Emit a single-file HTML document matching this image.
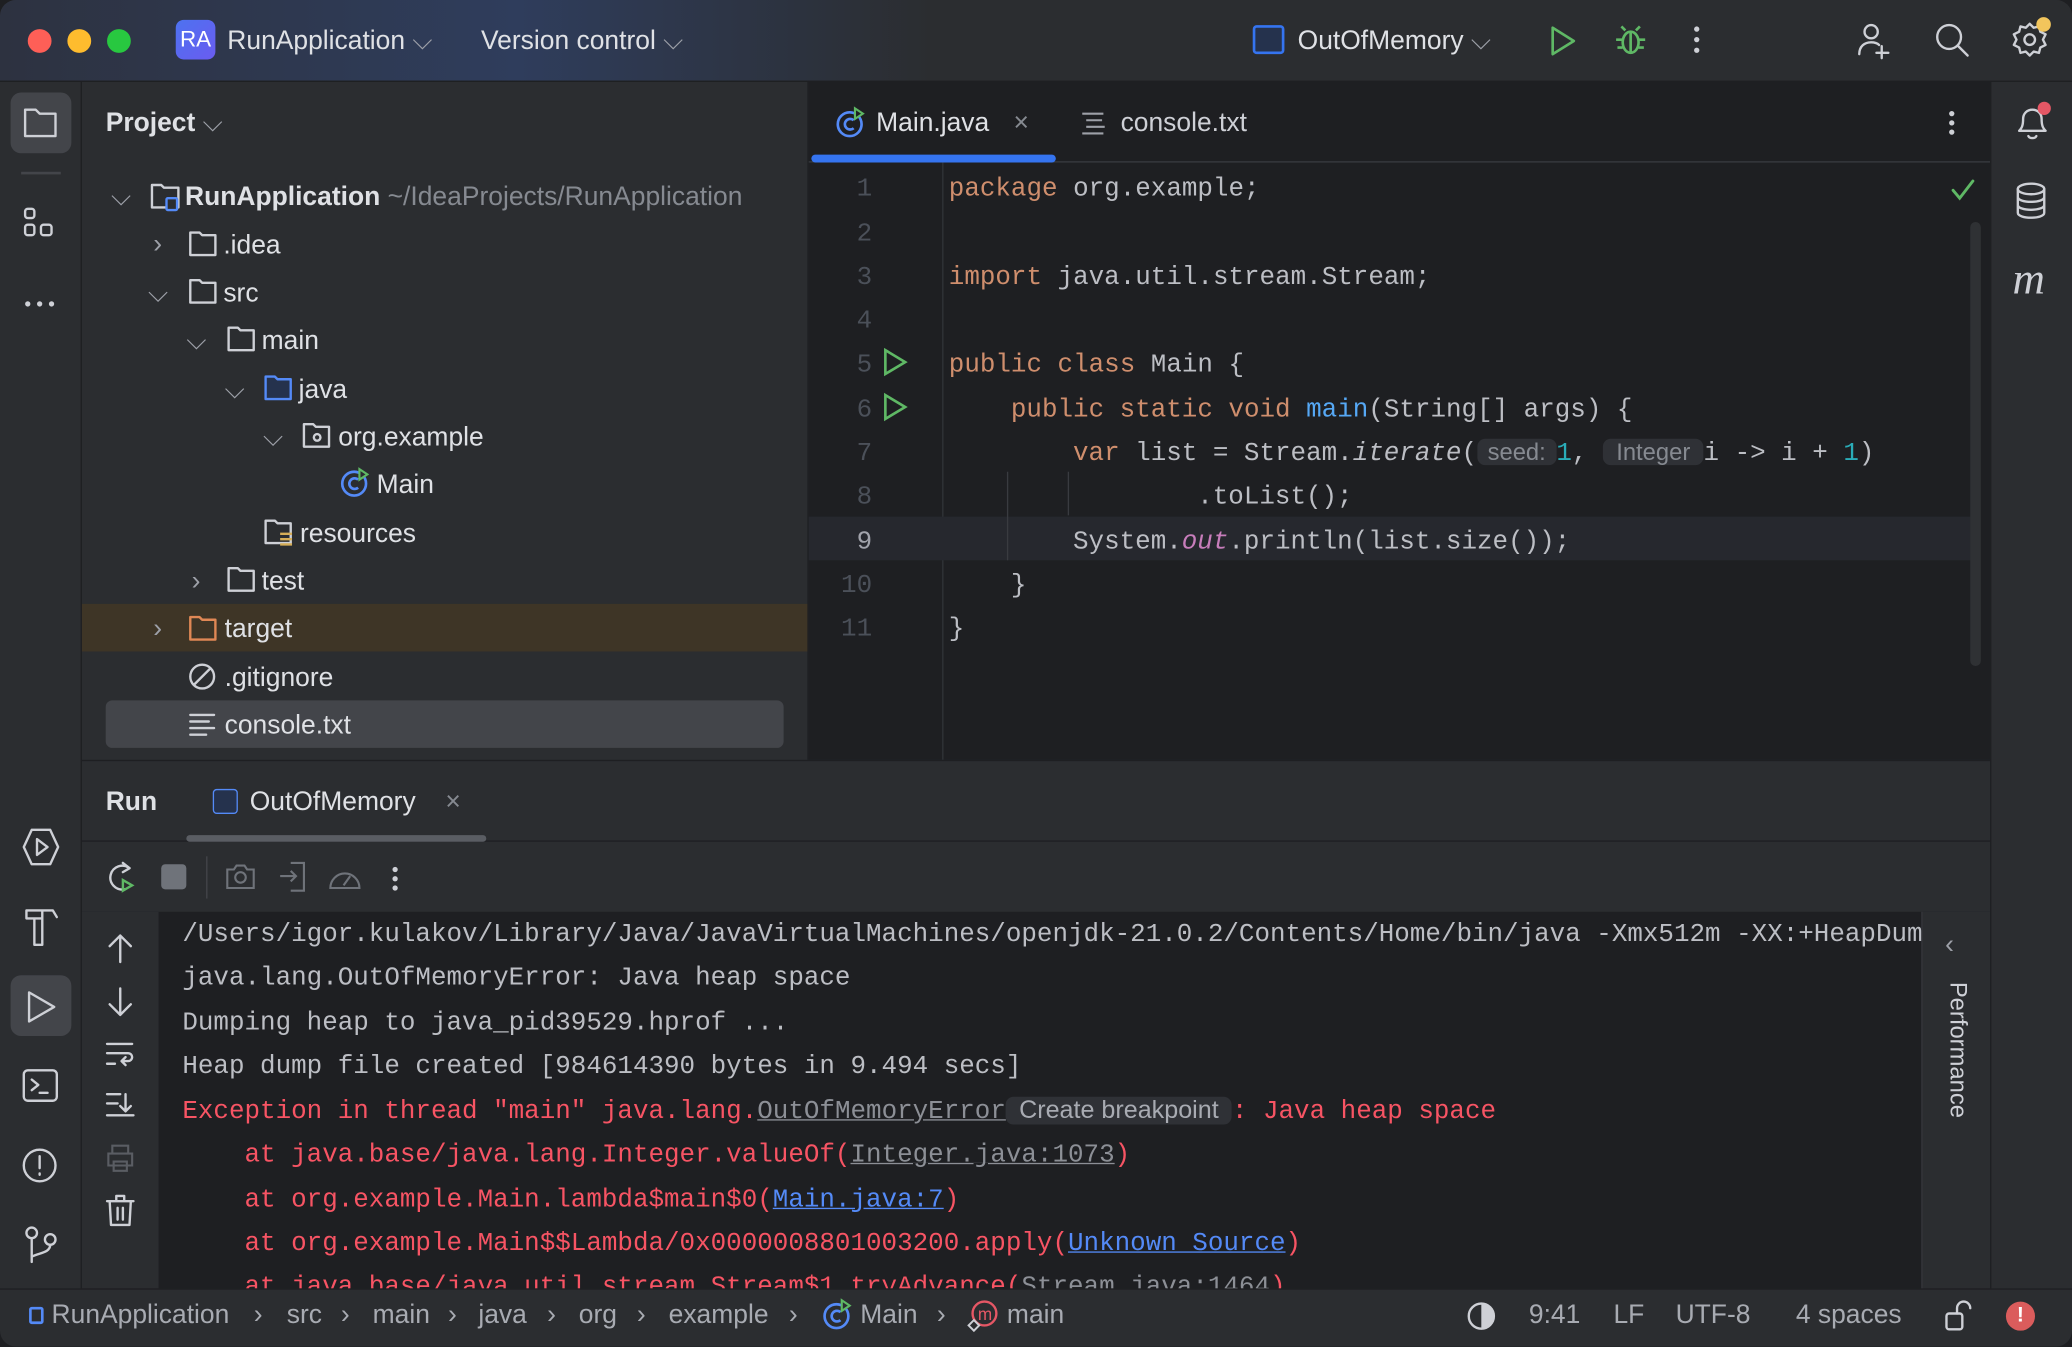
<!DOCTYPE html>
<html><head><meta charset="utf-8"><style>
html,body{margin:0;padding:0;background:#1e1f22;overflow:hidden;width:2072px;height:1346px}
#w{position:absolute;left:0;top:0;width:1568px;height:1019px;transform:scale(1.32143);transform-origin:0 0;background:#2b2d30;font-family:"Liberation Sans",sans-serif;color:#dfe1e5;border-radius:12px;overflow:hidden}
.a{position:absolute;white-space:nowrap}
.ui{font-size:20px;margin-top:2px}
.mono{font-family:"Liberation Mono",monospace;font-size:19.6px}
.kw{color:#cf8e6d}.fn{color:#56a8f5}.num{color:#2aacb8}.st{color:#c77dbb;font-style:italic}
.hint{background:#2f3136;color:#868a91;border-radius:6px;padding:0 8px;font-family:"Liberation Sans",sans-serif;font-size:18px}
.red{color:#f75464}
.ln{color:#4b5059;width:40px;text-align:right}
svg{position:absolute;overflow:visible}
.ic{fill:none;stroke:#ced0d6;stroke-width:1.8;stroke-linecap:round;stroke-linejoin:round}
.sb{color:#a8abb2}
</style></head><body><div id="w">
<!-- title bar -->
<div class="a" style="left:0;top:0;width:1568px;height:61px;background:linear-gradient(90deg,#2d3240 0%,#2f3d5c 25%,#2b2d30 45%,#2b2d30 100%);border-bottom:1px solid #1e1f22"></div>
<div class="a" style="left:21px;top:22px;width:18px;height:18px;border-radius:50%;background:#fe5f57"></div>
<div class="a" style="left:51px;top:22px;width:18px;height:18px;border-radius:50%;background:#febc2e"></div>
<div class="a" style="left:81px;top:22px;width:18px;height:18px;border-radius:50%;background:#28c840"></div>
<div class="a" style="left:133px;top:15px;width:30px;height:30px;border-radius:6px;background:linear-gradient(135deg,#4d72f0,#6a5cf0);font-size:17px;line-height:30px;text-align:center;color:#fff">RA</div>
<div class="a ui" style="left:172px;top:18px">RunApplication <span style="color:#9da0a8">⌵</span></div>
<div class="a ui" style="left:364px;top:18px">Version control <span style="color:#9da0a8">⌵</span></div>
<div class="a" style="left:948px;top:19px;width:24px;height:22px;border:2px solid #3574f0;border-radius:3px;box-sizing:border-box;background:#25324d"></div>
<div class="a ui" style="left:982px;top:18px">OutOfMemory <span style="color:#9da0a8">⌵</span></div>
<svg style="left:1172px;top:19px" width="22" height="24"><path d="M3 2 L19 12 L3 22 Z" fill="none" stroke="#5fb865" stroke-width="2" stroke-linejoin="round"/></svg>
<svg style="left:1222px;top:17px" width="24" height="26"><ellipse cx="12" cy="15" rx="6" ry="8" fill="none" stroke="#5fb865" stroke-width="2"/><path d="M6 13H1M23 13h-5M6 19H2M22 19h-4M8 6 5 3M16 6l3-3M12 8v14" stroke="#5fb865" stroke-width="2" fill="none"/></svg>
<div class="a" style="left:1282px;top:20px;width:4px;height:4px;border-radius:2px;background:#ced0d6;box-shadow:0 8px #ced0d6,0 16px #ced0d6"></div>
<svg style="left:1404px;top:16px" width="30" height="30"><circle cx="12" cy="8" r="5" class="ic"/><path d="M3 25c0-6 4-9 9-9 3 0 5 1 6 2M20 19v9M16 24h9" class="ic"/></svg>
<svg style="left:1464px;top:17px" width="28" height="28"><circle cx="11" cy="11" r="9" class="ic"/><path d="M18 18l7 7" class="ic"/></svg>
<svg style="left:1522px;top:15px" width="30" height="30"><circle cx="14" cy="15" r="4" class="ic"/><path d="M14 3l3 3 4-1 1 4 4 2-2 4 2 4-4 2-1 4-4-1-3 3-3-3-4 1-1-4-4-2 2-4-2-4 4-2 1-4 4 1z" class="ic"/></svg>
<div class="a" style="left:1541px;top:13px;width:11px;height:11px;border-radius:50%;background:#f2c55c"></div>

<!-- left strip -->
<div class="a" style="left:61px;top:62px;width:1px;height:913px;background:#1e1f22"></div>
<div class="a" style="left:8px;top:70px;width:46px;height:46px;border-radius:8px;background:#43454a"></div>
<svg style="left:17px;top:80px" width="28" height="26"><path d="M2 3h8l3 3h12v17H2z" class="ic"/></svg>
<div class="a" style="left:16px;top:130px;width:30px;height:2px;background:#43454a"></div>
<svg style="left:18px;top:157px" width="26" height="28"><rect x="1" y="1" width="7" height="7" rx="2" class="ic"/><rect x="1" y="13" width="7" height="8" rx="2" class="ic"/><rect x="13" y="13" width="8" height="8" rx="2" class="ic"/></svg>
<div class="a" style="left:19px;top:228px;width:4px;height:4px;border-radius:2px;background:#ced0d6;box-shadow:9px 0 #ced0d6,18px 0 #ced0d6"></div>
<svg style="left:16px;top:626px" width="30" height="30"><path d="M8 2h14l6 13-6 13H8L2 15z" class="ic"/><path d="M12 9l8 6-8 6z" class="ic"/></svg>
<svg style="left:18px;top:686px" width="28" height="32"><path d="M2 3h20l3 5M2 3v6h6M8 9h6v20h-6zM14 3v6" class="ic"/></svg>
<div class="a" style="left:8px;top:738px;width:46px;height:46px;border-radius:8px;background:#43454a"></div>
<svg style="left:19px;top:748px" width="26" height="28"><path d="M3 3l19 11L3 25z" class="ic"/></svg>
<svg style="left:17px;top:808px" width="28" height="28"><rect x="1" y="2" width="25" height="23" rx="3" class="ic"/><path d="M7 9l5 4-5 4M13 19h6" class="ic"/></svg>
<svg style="left:16px;top:868px" width="30" height="30"><circle cx="14" cy="14" r="12" class="ic"/><path d="M14 7v9M14 20v1" class="ic"/></svg>
<svg style="left:18px;top:928px" width="28" height="30"><circle cx="6" cy="5" r="4" class="ic"/><circle cx="20" cy="10" r="4" class="ic"/><path d="M6 9v18M20 14c0 6-8 6-14 9" class="ic"/></svg>

<!-- project panel -->
<div class="a ui" style="left:80px;top:80px;font-weight:bold">Project <span style="color:#9da0a8;font-weight:normal">⌵</span></div>
<div class="a" style="left:62px;top:457px;width:550px;height:36px;background:#3e3526"></div>
<div class="a" style="left:80px;top:530px;width:513px;height:36px;border-radius:5px;background:#43454a"></div>
<div class="a" style="left:611px;top:62px;width:1px;height:513px;background:#1e1f22"></div>
<div class="a ui" style="left:84px;top:136px;color:#9da0a8">⌵</div>
<svg style="left:114px;top:138px" width="24" height="22"><path d="M1 2h7l2 2h11v15H1z" class="ic"/><rect x="12" y="12" width="8" height="9" rx="1" fill="#2b2d30" stroke="#548af7" stroke-width="1.8"/></svg>
<div class="a ui" style="left:140px;top:136px;font-weight:bold">RunApplication <span style="color:#868a91;font-weight:normal">~/IdeaProjects/RunApplication</span></div>
<div class="a ui" style="left:116px;top:172px;color:#9da0a8">›</div>
<svg style="left:143px;top:175px" width="22" height="20"><path d="M1 1h7l2 2h10v15H1z" class="ic"/></svg>
<div class="a ui" style="left:169px;top:173px">.idea</div>
<div class="a ui" style="left:112px;top:209px;color:#9da0a8">⌵</div>
<svg style="left:143px;top:211px" width="22" height="20"><path d="M1 1h7l2 2h10v15H1z" class="ic"/></svg>
<div class="a ui" style="left:169px;top:209px">src</div>
<div class="a ui" style="left:141px;top:245px;color:#9da0a8">⌵</div>
<svg style="left:172px;top:247px" width="22" height="20"><path d="M1 1h7l2 2h10v15H1z" class="ic"/></svg>
<div class="a ui" style="left:198px;top:245px">main</div>
<div class="a ui" style="left:170px;top:282px;color:#9da0a8">⌵</div>
<svg style="left:200px;top:284px" width="22" height="20"><path d="M1 1h7l2 2h10v15H1z" fill="#25324d" stroke="#548af7" stroke-width="1.8" stroke-linejoin="round"/></svg>
<div class="a ui" style="left:226px;top:282px">java</div>
<div class="a ui" style="left:199px;top:318px;color:#9da0a8">⌵</div>
<svg style="left:229px;top:320px" width="22" height="20"><path d="M1 1h7l2 2h10v15H1z" class="ic"/><circle cx="11" cy="11" r="2.5" class="ic"/></svg>
<div class="a ui" style="left:256px;top:318px">org.example</div>
<svg style="left:257px;top:354px" width="24" height="24"><circle cx="11" cy="12" r="9" fill="none" stroke="#548af7" stroke-width="2"/><path d="M14 9a4 4 0 1 0 0 6" fill="none" stroke="#548af7" stroke-width="2"/><path d="M15 1l6 4-6 4z" fill="#2b2d30" stroke="#5fb865" stroke-width="1.6"/></svg>
<div class="a ui" style="left:285px;top:354px">Main</div>
<svg style="left:200px;top:393px" width="24" height="22"><path d="M1 1h7l2 2h10v15H1z" class="ic"/><path d="M12 11h9M12 15h9M12 19h9" stroke="#d6ae58" stroke-width="1.8"/></svg>
<div class="a ui" style="left:227px;top:391px">resources</div>
<div class="a ui" style="left:145px;top:427px;color:#9da0a8">›</div>
<svg style="left:172px;top:429px" width="22" height="20"><path d="M1 1h7l2 2h10v15H1z" class="ic"/></svg>
<div class="a ui" style="left:198px;top:427px">test</div>
<div class="a ui" style="left:116px;top:463px;color:#9da0a8">›</div>
<svg style="left:143px;top:466px" width="22" height="20"><path d="M1 1h7l2 2h10v15H1z" fill="none" stroke="#e08855" stroke-width="1.8" stroke-linejoin="round"/></svg>
<div class="a ui" style="left:170px;top:463px">target</div>
<svg style="left:143px;top:502px" width="22" height="22"><circle cx="10" cy="10" r="9" class="ic"/><path d="M4 16L16 4" class="ic"/></svg>
<div class="a ui" style="left:170px;top:500px">.gitignore</div>
<svg style="left:143px;top:539px" width="22" height="20"><path d="M1 2h18M1 7h14M1 12h18M1 17h12" class="ic"/></svg>
<div class="a ui" style="left:170px;top:536px">console.txt</div>

<!-- editor -->
<div class="a" style="left:612px;top:62px;width:894px;height:513px;background:#1e1f22"></div>
<div class="a" style="left:612px;top:122px;width:894px;height:1px;background:#393b40"></div>
<div class="a" style="left:614px;top:117px;width:185px;height:6px;border-radius:3px;background:#3574f0"></div>
<svg style="left:632px;top:80px" width="26" height="26"><circle cx="11" cy="14" r="9" fill="none" stroke="#548af7" stroke-width="2"/><path d="M14 11a4 4 0 1 0 0 6" fill="none" stroke="#548af7" stroke-width="2"/><path d="M15 2l6 4-6 4z" fill="#1e1f22" stroke="#5fb865" stroke-width="1.6"/></svg>
<div class="a ui" style="left:663px;top:80px">Main.java</div>
<div class="a ui" style="left:767px;top:80px;color:#868a91">×</div>
<svg style="left:818px;top:84px" width="20" height="18"><path d="M1 2h16M4 7h12M4 12h14M1 17h16" stroke="#9da0a8" stroke-width="1.6" fill="none"/></svg>
<div class="a ui" style="left:848px;top:80px;color:#ced0d6">console.txt</div>
<div class="a" style="left:1475px;top:84px;width:4px;height:4px;border-radius:2px;background:#ced0d6;box-shadow:0 7px #ced0d6,0 14px #ced0d6"></div>
<div class="a" style="left:713px;top:123px;width:1px;height:452px;background:#313438"></div>
<div class="a" style="left:612px;top:391px;width:882px;height:33px;background:#26282e"></div>
<div class="a" style="left:762px;top:357px;width:1px;height:67px;background:#393b40"></div>
<div class="a" style="left:808px;top:357px;width:1px;height:33px;background:#393b40"></div>
<div class="a" style="left:1491px;top:168px;width:8px;height:336px;border-radius:4px;background:#2f3134"></div>
<svg style="left:1476px;top:135px" width="20" height="18"><path d="M2 9l5 6 10-13" fill="none" stroke="#5fb865" stroke-width="2.2" stroke-linecap="round"/></svg>
<svg style="left:668px;top:264px" width="20" height="20"><path d="M2 1l15 9-15 9z" fill="none" stroke="#5fb865" stroke-width="2"/></svg>
<svg style="left:668px;top:298px" width="20" height="20"><path d="M2 1l15 9-15 9z" fill="none" stroke="#5fb865" stroke-width="2"/></svg>
<div class="mono" style="position:absolute;left:0;top:2px">
<div class="a ln" style="left:620px;top:130px">1</div>
<div class="a ln" style="left:620px;top:164px">2</div>
<div class="a ln" style="left:620px;top:197px">3</div>
<div class="a ln" style="left:620px;top:230px">4</div>
<div class="a ln" style="left:620px;top:263px">5</div>
<div class="a ln" style="left:620px;top:297px">6</div>
<div class="a ln" style="left:620px;top:330px">7</div>
<div class="a ln" style="left:620px;top:363px">8</div>
<div class="a ln" style="left:620px;top:397px;color:#a1a3ab">9</div>
<div class="a ln" style="left:620px;top:430px">10</div>
<div class="a ln" style="left:620px;top:463px">11</div>
<div class="a" style="left:718px;top:130px;color:#bcbec4"><span class="kw">package</span> org.example;</div>
<div class="a" style="left:718px;top:197px;color:#bcbec4"><span class="kw">import</span> java.util.stream.Stream;</div>
<div class="a" style="left:718px;top:263px;color:#bcbec4"><span class="kw">public class</span> Main {</div>
<div class="a" style="left:765px;top:297px;color:#bcbec4"><span class="kw">public static void</span> <span class="fn">main</span>(String[] args) {</div>
<div class="a" style="left:812px;top:330px;color:#bcbec4"><span class="kw">var</span> list = Stream.<i>iterate</i>(<span class="hint">seed:</span><span class="num">1</span>, <span class="hint" style="padding:0 10px">Integer</span>i -&gt; i + <span class="num">1</span>)</div>
<div class="a" style="left:906px;top:363px;color:#bcbec4">.toList();</div>
<div class="a" style="left:812px;top:397px;color:#bcbec4">System.<span class="st">out</span>.println(list.size());</div>
<div class="a" style="left:765px;top:430px;color:#bcbec4">}</div>
<div class="a" style="left:718px;top:463px;color:#bcbec4">}</div>
</div>

<!-- right strip -->
<div class="a" style="left:1506px;top:62px;width:1px;height:913px;background:#1e1f22"></div>
<svg style="left:1524px;top:78px" width="28" height="30"><path d="M4 21c2-2 3-4 3-9 0-4 3-7 7-7s7 3 7 7c0 5 1 7 3 9zM11 25c1 2 5 2 6 0" class="ic"/></svg>
<div class="a" style="left:1542px;top:77px;width:10px;height:10px;border-radius:50%;background:#e55765"></div>
<svg style="left:1525px;top:138px" width="26" height="30"><ellipse cx="12" cy="5" rx="10" ry="4" class="ic"/><path d="M2 5v18c0 5 20 5 20 0V5M2 11c0 5 20 5 20 0M2 17c0 5 20 5 20 0" class="ic"/></svg>
<div class="a" style="left:1523px;top:193px;font-family:'Liberation Serif',serif;font-style:italic;font-size:34px;color:#ced0d6">m</div>

<!-- run panel -->
<div class="a" style="left:62px;top:575px;width:1444px;height:1px;background:#1e1f22"></div>
<div class="a ui" style="left:80px;top:594px;font-weight:bold">Run</div>
<div class="a" style="left:161px;top:597px;width:19px;height:19px;border:1.5px solid #548af7;border-radius:3px;box-sizing:border-box;background:#25324d"></div>
<div class="a ui" style="left:189px;top:594px">OutOfMemory</div>
<div class="a ui" style="left:337px;top:594px;color:#868a91">×</div>
<div class="a" style="left:62px;top:636px;width:1444px;height:1px;background:#1e1f22"></div>
<div class="a" style="left:141px;top:632px;width:227px;height:5px;border-radius:3px;background:#5a5d63"></div>
<svg style="left:80px;top:651px" width="24" height="26"><path d="M18 6a9 9 0 1 0 -4 16" class="ic"/><path d="M13 2l5 4-5 3" class="ic"/><path d="M13 15l7 4-7 4z" fill="none" stroke="#5fb865" stroke-width="1.8"/></svg>
<div class="a" style="left:122px;top:654px;width:19px;height:19px;border-radius:3px;background:#6f737a"></div>
<div class="a" style="left:156px;top:648px;width:1px;height:32px;background:#43454a"></div>
<svg style="left:170px;top:652px" width="24" height="22"><path d="M2 6h5l2-3h6l2 3h5v14H2z" stroke="#6f737a" stroke-width="1.6" fill="none"/><circle cx="12" cy="12" r="4" stroke="#6f737a" stroke-width="1.6" fill="none"/></svg>
<svg style="left:210px;top:651px" width="24" height="26"><path d="M10 2h10v21H10M2 12h12M10 8l4 4-4 4" stroke="#6f737a" stroke-width="1.6" fill="none"/></svg>
<svg style="left:248px;top:652px" width="26" height="24"><path d="M2 20a11 11 0 1 1 22 0zM12 18l5-7" stroke="#6f737a" stroke-width="1.6" fill="none"/></svg>
<div class="a" style="left:297px;top:656px;width:4px;height:4px;border-radius:2px;background:#ced0d6;box-shadow:0 7px #ced0d6,0 14px #ced0d6"></div>
<div class="a" style="left:62px;top:690px;width:1444px;height:285px;background:#1e1f22"></div>
<div class="a" style="left:62px;top:690px;width:58px;height:285px;background:#2b2d30"></div>
<svg style="left:80px;top:706px" width="22" height="24"><path d="M11 22V2M3 10l8-8 8 8" class="ic"/></svg>
<svg style="left:80px;top:746px" width="22" height="24"><path d="M11 2v20M3 14l8 8 8-8" class="ic"/></svg>
<svg style="left:80px;top:788px" width="22" height="22"><path d="M1 2h19M1 9h16a3 3 0 0 1 0 6h-5l3-3M12 15l3 3M1 17h6" class="ic"/></svg>
<svg style="left:80px;top:826px" width="22" height="22"><path d="M1 2h10M1 9h8M1 18h20M15 2v13M11 11l4 4 4-4" class="ic"/></svg>
<svg style="left:80px;top:866px" width="22" height="22"><path d="M5 7V1h12v6M2 7h18v9H2zM6 13h10v7H6z" stroke="#5a5d63" stroke-width="1.6" fill="none"/></svg>
<svg style="left:80px;top:904px" width="22" height="24"><path d="M1 5h20M8 5V1h6v4M3 5l1 18h14l1-18M9 10v9M13 10v9" class="ic"/></svg>
<div class="a" style="left:1454px;top:690px;width:1px;height:285px;background:#393b40"></div>
<div class="a" style="left:1455px;top:690px;width:51px;height:285px;background:#2b2d30"></div>
<div class="a ui" style="left:1472px;top:702px;color:#9da0a8">‹</div>
<div class="a" style="left:1468px;top:743px;font-size:18px;color:#ced0d6;transform-origin:0 0;transform:translate(24px,0) rotate(90deg)">Performance</div>
<div class="a mono" style="left:138px;top:691px;width:1316px;height:284px;overflow:hidden;color:#bcbec4;line-height:33.3px;white-space:pre">/Users/igor.kulakov/Library/Java/JavaVirtualMachines/openjdk-21.0.2/Contents/Home/bin/java -Xmx512m -XX:+HeapDumpOnOutOfMemoryError
java.lang.OutOfMemoryError: Java heap space
Dumping heap to java_pid39529.hprof ...
Heap dump file created [984614390 bytes in 9.494 secs]
<span class="red">Exception in thread "main" java.lang.<u style="color:#8c8f96">OutOfMemoryError</u><span class="hint" style="color:#a8abb2;padding:0 10px;font-size:19px">Create breakpoint</span>: Java heap space</span>
<span class="red">    at java.base/java.lang.Integer.valueOf(<u style="color:#8c8f96">Integer.java:1073</u>)</span>
<span class="red">    at org.example.Main.lambda$main$0(<u style="color:#548af7">Main.java:7</u>)</span>
<span class="red">    at org.example.Main$$Lambda/0x0000008801003200.apply(<u style="color:#548af7">Unknown Source</u>)</span>
<span class="red">    at java.base/java.util.stream.Stream$1.tryAdvance(<span style="color:#8c8f96">Stream.java:1464</span>)</span></div>

<!-- status bar -->
<div class="a" style="left:0;top:975px;width:1568px;height:1px;background:#1e1f22"></div>
<div class="a" style="left:22px;top:989px;width:11px;height:13px;border:2px solid #548af7;border-radius:2px;box-sizing:border-box"></div>
<div class="a ui sb" style="left:39px;top:982px">RunApplication</div>
<div class="a ui sb" style="left:192px;top:982px">›</div>
<div class="a ui sb" style="left:217px;top:982px">src</div>
<div class="a ui sb" style="left:258px;top:982px">›</div>
<div class="a ui sb" style="left:282px;top:982px">main</div>
<div class="a ui sb" style="left:339px;top:982px">›</div>
<div class="a ui sb" style="left:362px;top:982px">java</div>
<div class="a ui sb" style="left:414px;top:982px">›</div>
<div class="a ui sb" style="left:438px;top:982px">org</div>
<div class="a ui sb" style="left:482px;top:982px">›</div>
<div class="a ui sb" style="left:506px;top:982px">example</div>
<div class="a ui sb" style="left:597px;top:982px">›</div>
<svg style="left:622px;top:983px" width="24" height="24"><circle cx="11" cy="13" r="9" fill="none" stroke="#548af7" stroke-width="2"/><path d="M14 10a4 4 0 1 0 0 6" fill="none" stroke="#548af7" stroke-width="2"/><path d="M15 1l6 4-6 4z" fill="#2b2d30" stroke="#5fb865" stroke-width="1.6"/></svg>
<div class="a ui sb" style="left:651px;top:982px">Main</div>
<div class="a ui sb" style="left:709px;top:982px">›</div>
<svg style="left:732px;top:983px" width="24" height="26"><circle cx="13" cy="11" r="9" fill="none" stroke="#e55765" stroke-width="1.8"/><text x="8" y="16" font-size="13" fill="#e55765" font-family="Liberation Sans">m</text><path d="M5 16l4 4-4 4-4-4z" fill="#2b2d30" stroke="#ced0d6" stroke-width="1.5"/></svg>
<div class="a ui sb" style="left:762px;top:982px">main</div>
<svg style="left:1110px;top:985px" width="24" height="24"><circle cx="11" cy="11" r="9.5" fill="none" stroke="#ced0d6" stroke-width="1.8"/><path d="M11 1.5a9.5 9.5 0 0 1 0 19z" fill="#ced0d6"/></svg>
<div class="a ui sb" style="left:1157px;top:982px">9:41</div>
<div class="a ui sb" style="left:1221px;top:982px">LF</div>
<div class="a ui sb" style="left:1268px;top:982px">UTF-8</div>
<div class="a ui sb" style="left:1359px;top:982px">4 spaces</div>
<svg style="left:1472px;top:984px" width="22" height="24"><rect x="1" y="10" width="12" height="12" rx="2" class="ic"/><path d="M9 10V6a5 5 0 0 1 10 0" class="ic"/></svg>
<div class="a" style="left:1518px;top:985px;width:22px;height:22px;border-radius:50%;background:#db5c5c;color:#fff;font-size:16px;font-weight:bold;text-align:center;line-height:22px">!</div>
</div></body></html>
